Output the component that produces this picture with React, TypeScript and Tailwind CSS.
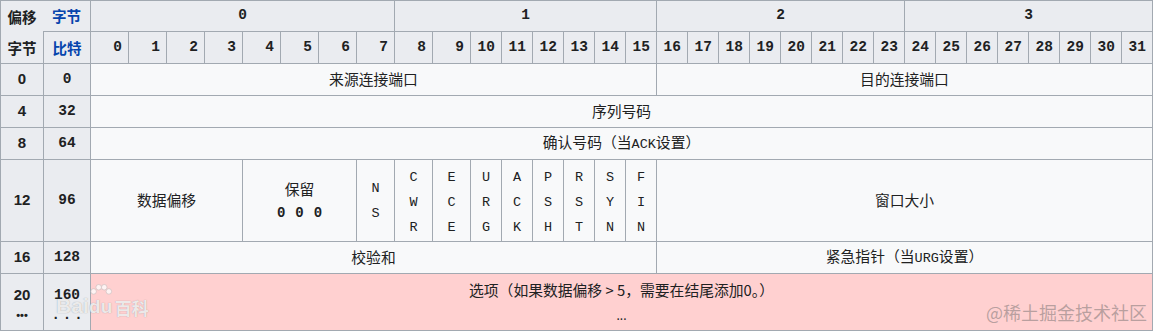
const head = 'bg-[#eaecf0]';
const body = 'bg-[#f8f9fa]';
const mono = "font-['Liberation_Mono',monospace]";
const cjk = "font-['Noto_Sans_CJK_SC',sans-serif]";
const sans = "font-['Liberation_Sans','Noto_Sans_CJK_SC',sans-serif]";
const cell = 'flex items-center justify-center';

const bits = Array.from({ length: 32 }, (_, i) => i);

const flags = [
  ['C', 'W', 'R'],
  ['E', 'C', 'E'],
  ['U', 'R', 'G'],
  ['A', 'C', 'K'],
  ['P', 'S', 'H'],
  ['R', 'S', 'T'],
  ['S', 'Y', 'N'],
  ['F', 'I', 'N'],
];

function RowHead({ octet, bit }: { octet: string; bit: string }) {
  return (
    <>
      <div className={`${cell} ${head} ${sans} text-[15px] font-bold`}>{octet}</div>
      <div className={`${cell} ${head} ${mono} text-[14.5px] font-bold`}>{bit}</div>
    </>
  );
}

function Field({ span, children }: { span: string; children: React.ReactNode }) {
  return (
    <div className={`${cell} ${body} ${span} ${cjk} text-[14.8px]`}>
      <span className="whitespace-pre">{children}</span>
    </div>
  );
}

export default function App() {
  return (
    <div className="relative w-[1153px] text-[#202122]">
      <div className="grid grid-cols-[42px_46px_repeat(10,37px)_repeat(22,30px)] grid-rows-[30px_31px_31px_31px_31px_81px_31px_56px] gap-px p-px bg-[#a2a9b1]">
        {/* corner */}
        <div className={`col-span-2 row-span-2 grid grid-cols-[42px_47px] grid-rows-[31px_31px] ${head} ${cjk} text-[14.5px] font-bold`}>
          <div className={cell}>偏移</div>
          <div className={`${cell} border-b border-[#a2a9b1] text-[#0645ad]`}>字节</div>
          <div className={cell}>字节</div>
          <div className={`${cell} border-l border-[#a2a9b1] text-[#0645ad]`}>比特</div>
        </div>

        {['0', '1', '2', '3'].map((o) => (
          <div key={o} className={`${cell} ${head} col-span-8 ${mono} text-[14.5px] font-bold`}>
            {o}
          </div>
        ))}

        {bits.map((b) => (
          <div key={b} className={`flex items-center justify-end pr-[6px] ${head} ${mono} text-[14.5px] font-bold`}>
            {b}
          </div>
        ))}

        <RowHead octet="0" bit="0" />
        <Field span="col-span-16">来源连接端口</Field>
        <Field span="col-span-16">目的连接端口</Field>

        <RowHead octet="4" bit="32" />
        <Field span="col-span-32">序列号码</Field>

        <RowHead octet="8" bit="64" />
        <Field span="col-span-32">
          确认号码（当<span className={`${mono} text-[13.5px]`}>ACK</span>设置）
        </Field>

        <RowHead octet="12" bit="96" />
        <Field span="col-span-4">数据偏移</Field>
        <div className={`${cell} ${body} col-span-3 flex-col leading-[24px]`}>
          <span className={`${cjk} text-[14.8px]`}>保留</span>
          <span className={`flex gap-[10px] ${mono} text-[14px] font-bold`}>
            <span>0</span>
            <span>0</span>
            <span>0</span>
          </span>
        </div>
        <div className={`${cell} ${body} flex-col ${mono} text-[13.5px] leading-[25px]`}>
          <span>N</span>
          <span>S</span>
        </div>
        {flags.map((f, i) => (
          <div key={i} className={`${cell} ${body} flex-col pt-[3px] ${mono} text-[13.5px] leading-[25px]`}>
            {f.map((c, j) => (
              <span key={j}>{c}</span>
            ))}
          </div>
        ))}
        <Field span="col-span-16">窗口大小</Field>

        <RowHead octet="16" bit="128" />
        <Field span="col-span-16">校验和</Field>
        <Field span="col-span-16">
          紧急指针（当<span className={`${mono} text-[13.5px]`}>URG</span>设置）
        </Field>

        <div className={`${cell} ${head} flex-col ${sans} font-bold leading-[26px]`}>
          <span className="text-[15px]">20</span>
          <span className="text-[11px] leading-[14px] whitespace-nowrap">•••</span>
        </div>
        <div className={`${cell} ${head} flex-col ${mono} font-bold leading-[26px]`}>
          <span className="text-[14.5px]">160</span>
          <span className="text-[14px] leading-[14px] whitespace-nowrap tracking-[3px] pl-[3px]">...</span>
        </div>
        <div className={`${cell} col-span-32 flex-col bg-[#ffd0d0] ${cjk} text-[14.8px] leading-[25px]`}>
          <span className="whitespace-pre">选项（如果数据偏移 &gt; 5，需要在结尾添加0。）</span>
          <span className="text-[12px]">...</span>
        </div>
      </div>

      {/* watermarks */}
      <div className="pointer-events-none absolute left-[56px] top-[284px] flex items-end text-white/80 [text-shadow:0_0_1px_rgba(110,110,110,0.7)]">
        <span className={`${sans} text-[21px] font-bold leading-none`}>Bai</span>
        <span className="relative flex flex-col items-center">
          <svg width="24" height="13" viewBox="0 0 26 14" className="opacity-75">
            <circle cx="5" cy="8" r="3" fill="#fff" stroke="#b8b8b8" strokeWidth="0.7" />
            <circle cx="10.5" cy="3.5" r="3" fill="#fff" stroke="#b8b8b8" strokeWidth="0.7" />
            <circle cx="16.5" cy="3.5" r="3" fill="#fff" stroke="#b8b8b8" strokeWidth="0.7" />
            <circle cx="21.5" cy="8" r="3" fill="#fff" stroke="#b8b8b8" strokeWidth="0.7" />
          </svg>
          <span className={`${sans} text-[19px] font-bold leading-none`}>du</span>
        </span>
        <span className={`${cjk} ml-[2px] text-[17px] font-bold leading-none`}>百科</span>
      </div>
      <div className={`pointer-events-none absolute left-[986px] top-[303px] ${cjk} text-[18px] leading-none text-[#8a7f7f]/60`}>
        @稀土掘金技术社区
      </div>
    </div>
  );
}
